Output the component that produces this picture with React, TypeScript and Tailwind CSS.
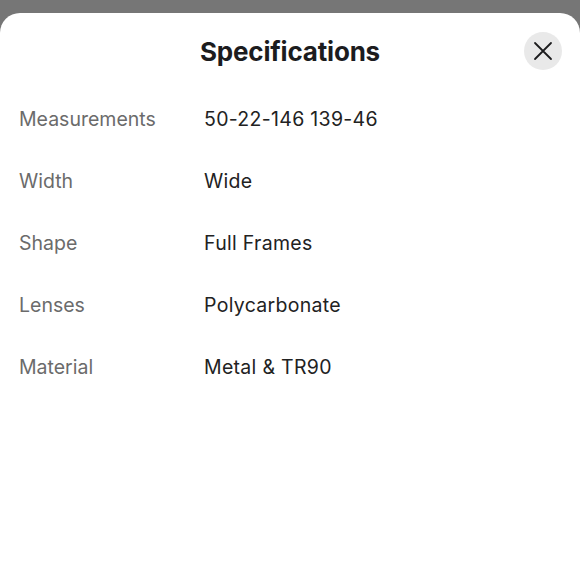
import React from "react";

const specs = [
  { label: "Measurements", value: "50-22-146 139-46" },
  { label: "Width", value: "Wide" },
  { label: "Shape", value: "Full Frames" },
  { label: "Lenses", value: "Polycarbonate" },
  { label: "Material", value: "Metal & TR90" },
];

export default function App() {
  return (
    <div
      className="w-[580px] h-[580px] bg-[#767676] pt-[13px] overflow-hidden"
      style={{ fontFamily: "Inter, 'Noto Sans', sans-serif" }}
    >
      <div className="h-full bg-white rounded-t-[20px]">
        <div className="relative flex items-center justify-center h-[76px]">
          <h3 className="text-[26px] font-bold text-[#1c1c1e] tracking-[-0.2px]">
            Specifications
          </h3>
          <button className="absolute right-[18px] top-[19px] w-[38px] h-[38px] rounded-full bg-[#e9e9e9] flex items-center justify-center">
            <svg width="20" height="20" viewBox="0 0 20 20" fill="none">
              <path
                d="M2 2L18 18M18 2L2 18"
                stroke="#1c1c1e"
                strokeWidth="1.8"
                strokeLinecap="round"
              />
            </svg>
          </button>
        </div>

        <div className="flex flex-col">
          {specs.map((s) => (
            <div key={s.label} className="flex items-center h-[62px] px-[19px] text-[19.5px]">
              <span className="w-[185px] text-[#6b6b6b]">{s.label}</span>
              <span className="text-[#222222] tracking-[0.3px]">{s.value}</span>
            </div>
          ))}
        </div>
      </div>
    </div>
  );
}
